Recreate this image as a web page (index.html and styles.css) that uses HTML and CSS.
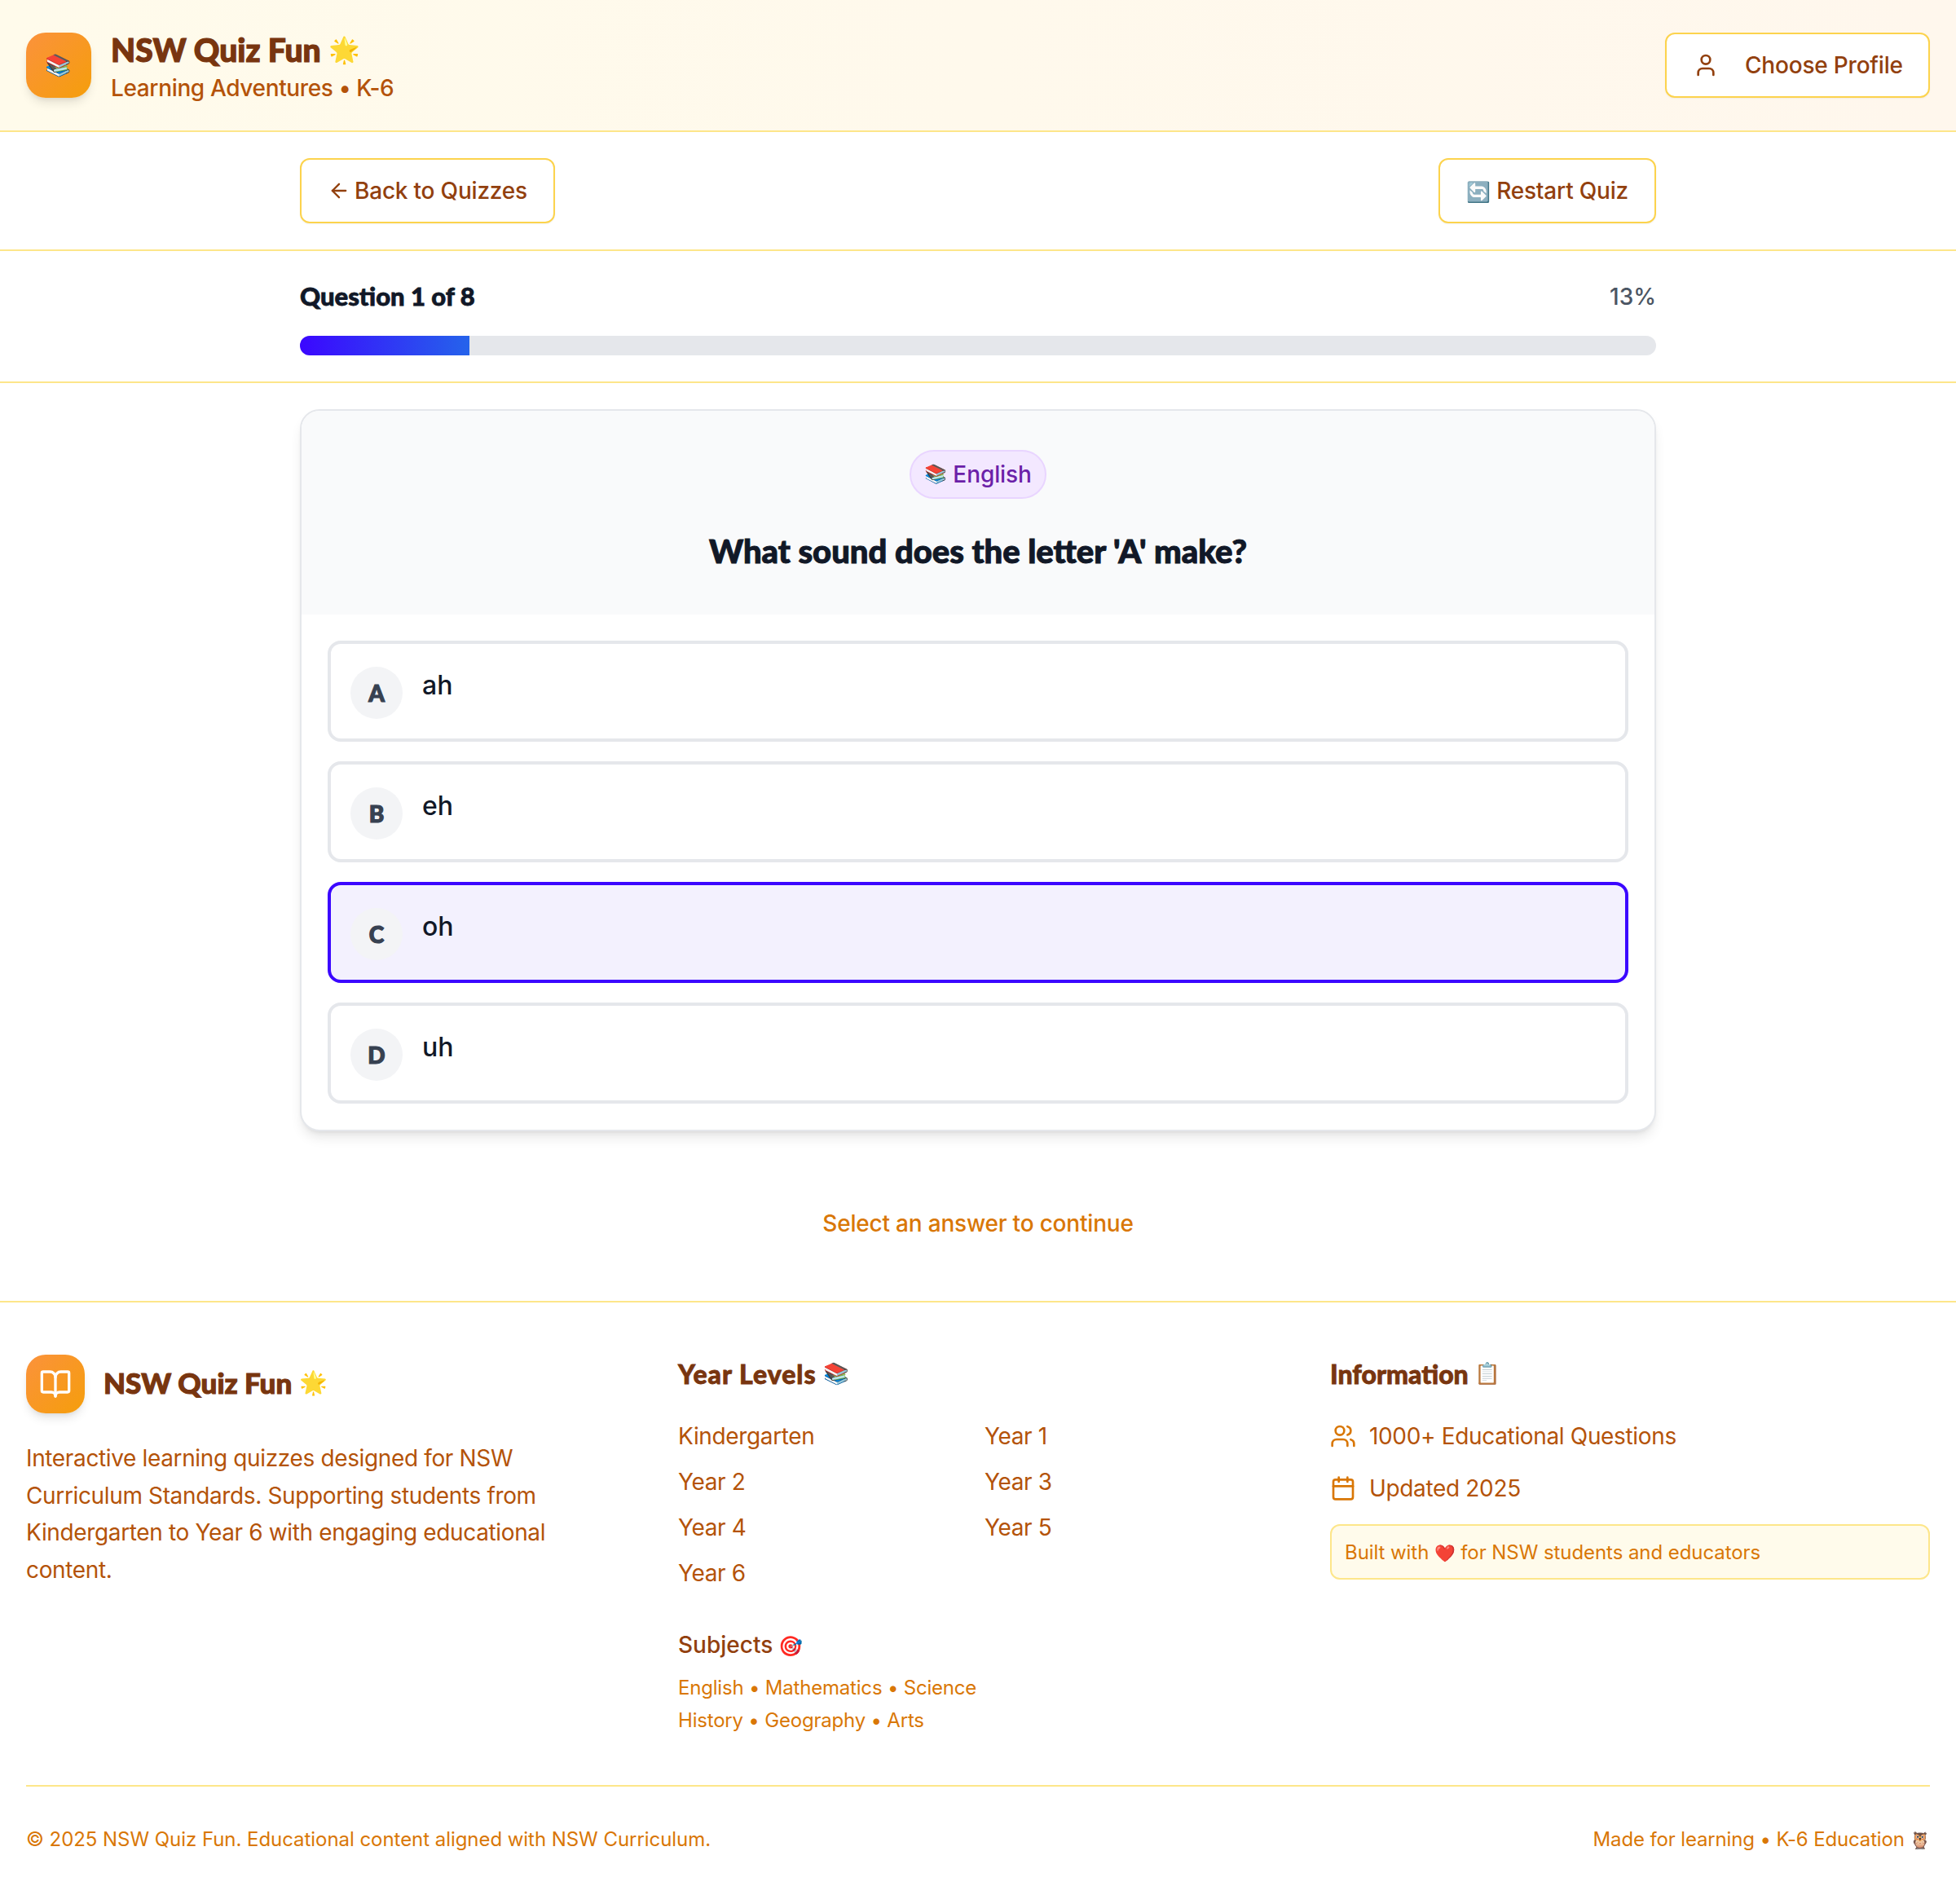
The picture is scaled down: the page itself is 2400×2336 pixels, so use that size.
FILE: index.html
```html
<!DOCTYPE html>
<html lang="en">
<head>
<meta charset="utf-8">
<title>NSW Quiz Fun</title>
<link rel="stylesheet" href="styles.css">
</head>
<body>
<header class="site-header">
  <div class="brand">
    <div class="logo"><span class="logo-emoji">📚</span></div>
    <div class="brand-text">
      <h1 class="brand-title">NSW Quiz Fun <span class="emoji">🌟</span></h1>
      <p class="brand-sub">Learning Adventures • K-6</p>
    </div>
  </div>
  <button class="btn btn-profile">
    <svg class="icon-user" viewBox="0 0 24 24"><path d="M19 21v-2a4 4 0 0 0-4-4H9a4 4 0 0 0-4 4v2"/><circle cx="12" cy="7" r="4"/></svg>
    <span>Choose Profile</span>
  </button>
</header>

<nav class="bar">
  <div class="wrap quiz-nav">
    <button class="btn btn-nav">
      <svg class="icon-arrow" viewBox="0 0 24 24"><path d="m12 19-7-7 7-7"/><path d="M19 12H5"/></svg>
      <span>Back to Quizzes</span>
    </button>
    <button class="btn btn-nav"><span><span class="emoji-lg">🔄</span> Restart Quiz</span></button>
  </div>
</nav>

<section class="bar">
  <div class="wrap progress">
    <div class="progress-head">
      <span class="progress-label">Question 1 of 8</span>
      <span class="progress-pct">13%</span>
    </div>
    <div class="track"><div class="fill" style="width:12.5%"></div></div>
  </div>
</section>

<main class="wrap main">
  <article class="card">
    <div class="card-head">
      <span class="badge"><span><span class="emoji">📚</span> English</span></span>
      <h2 class="question">What sound does the letter 'A' make?</h2>
    </div>
    <div class="options">
      <div class="option"><span class="letter">A</span><span class="answer">ah</span></div>
      <div class="option"><span class="letter">B</span><span class="answer">eh</span></div>
      <div class="option selected"><span class="letter">C</span><span class="answer">oh</span></div>
      <div class="option"><span class="letter">D</span><span class="answer">uh</span></div>
    </div>
  </article>
  <p class="hint">Select an answer to continue</p>
</main>

<footer class="footer">
  <div class="footer-cols">
    <div class="col">
      <div class="footer-brand">
        <div class="logo logo-small">
          <svg class="icon-book" viewBox="0 0 24 24"><path d="M12 7v14"/><path d="M3 18a1 1 0 0 1-1-1V4a1 1 0 0 1 1-1h5a4 4 0 0 1 4 4 4 4 0 0 1 4-4h5a1 1 0 0 1 1 1v13a1 1 0 0 1-1 1h-6a3 3 0 0 0-3 3 3 3 0 0 0-3-3z"/></svg>
        </div>
        <h3 class="footer-title">NSW Quiz Fun <span class="emoji">🌟</span></h3>
      </div>
      <p class="about">Interactive learning quizzes designed for NSW Curriculum Standards. Supporting students from Kindergarten to Year 6 with engaging educational content.</p>
    </div>
    <div class="col">
      <h4 class="col-title col-title-wide">Year Levels <span class="emoji">📚</span></h4>
      <ul class="years">
        <li>Kindergarten</li><li>Year 1</li><li>Year 2</li><li>Year 3</li><li>Year 4</li><li>Year 5</li><li>Year 6</li>
      </ul>
      <h5 class="subjects-title">Subjects <span class="emoji-lg">🎯</span></h5>
      <p class="subjects">English • Mathematics • Science<br>History • Geography • Arts</p>
    </div>
    <div class="col">
      <h4 class="col-title">Information <span class="emoji">📋</span></h4>
      <ul class="info">
        <li><svg class="icon-info" viewBox="0 0 24 24"><path d="M16 21v-2a4 4 0 0 0-4-4H6a4 4 0 0 0-4 4v2"/><circle cx="9" cy="7" r="4"/><path d="M22 21v-2a4 4 0 0 0-3-3.87"/><path d="M16 3.13a4 4 0 0 1 0 7.75"/></svg><span>1000+ Educational Questions</span></li>
        <li><svg class="icon-info" viewBox="0 0 24 24"><path d="M8 2v4"/><path d="M16 2v4"/><rect x="3" y="4" width="18" height="18" rx="2"/><path d="M3 10h18"/></svg><span>Updated 2025</span></li>
      </ul>
      <div class="built"><span>Built with <span class="emoji-lg">❤️</span> for NSW students and educators</span></div>
    </div>
  </div>
  <div class="footer-bottom">
    <span>© 2025 NSW Quiz Fun. Educational content aligned with NSW Curriculum.</span>
    <span class="made">Made for learning • K-6 Education <span class="emoji-lg owl">🦉</span></span>
  </div>
</footer>
</body>
</html>
```
FILE: styles.css
```css
* { box-sizing: border-box; margin: 0; padding: 0; }
html, body { background: #fff; }
body { font-family: Inter, "Noto Sans", "Noto Color Emoji", sans-serif; color: #111827; width: 2400px; height: 2336px; overflow: hidden; }
button { font-family: inherit; background: #fff; cursor: pointer; }
ul { list-style: none; }
svg { fill: none; stroke: currentColor; stroke-width: 2; stroke-linecap: round; stroke-linejoin: round; flex: none; display: block; }
.emoji { font-size: .8em; line-height: 0; vertical-align: .14em; -webkit-text-stroke: 0; }
.emoji-lg { font-size: .86em; line-height: 0; -webkit-text-stroke: 0; }
.owl { margin-right: -1px; }

.site-header { height: 162px; padding: 40px 32px; display: flex; justify-content: space-between; align-items: center; background: linear-gradient(90deg, #fffbeb, #fff7ed); border-bottom: 2px solid #fde68a; }
.brand { display: flex; align-items: center; gap: 24px; }
.logo { width: 80px; height: 80px; border-radius: 24px; background: linear-gradient(135deg, #fb923c, #f59e0b); box-shadow: 0 8px 12px -2px rgba(0,0,0,.1), 0 4px 6px -4px rgba(0,0,0,.1); display: flex; align-items: center; justify-content: center; flex: none; }
.logo-emoji { font-size: 26px; line-height: 1; }
.brand-text { display: flex; flex-direction: column; padding-top: 4px; }
.brand-title { font-family: Lato, sans-serif; font-weight: 900; font-size: 39px; line-height: 48px; height: 48px; color: #78350f; -webkit-text-stroke: 1.2px #78350f; }
.brand-sub { margin-top: 3px; font-size: 28px; line-height: 40px; font-weight: 500; letter-spacing: -.36px; color: #b45309; }

.btn { border: 2px solid #fcd34d; border-radius: 12px; height: 80px; display: flex; align-items: center; font-size: 28px; font-weight: 500; letter-spacing: -.2px; color: #92400e; white-space: nowrap; box-shadow: 0 1px 2px rgba(0,0,0,.05); }
.btn-profile { width: 325px; padding: 0 32px; gap: 32px; }
.icon-user { width: 32px; height: 32px; }
.btn-nav { padding: 0 32px; gap: 5px; }
.icon-arrow { width: 28px; height: 28px; }

.bar { border-bottom: 2px solid #fde68a; }
.wrap { width: 1664px; margin: 0 auto; }
.quiz-nav { height: 144px; display: flex; align-items: center; justify-content: space-between; }
.progress { height: 160px; padding-top: 32px; }
.progress-head { display: flex; justify-content: space-between; align-items: center; height: 48px; margin-bottom: 24px; }
.progress-label { padding-bottom: 2px; font-family: Lato, sans-serif; font-weight: 900; font-size: 31px; color: #111827; -webkit-text-stroke: .8px #111827; }
.progress-pct { font-size: 28px; font-weight: 500; color: #4b5563; }
.track { height: 24px; border-radius: 12px; background: #e5e7eb; overflow: hidden; }
.fill { height: 100%; background: linear-gradient(90deg, #3b07ff, #2563eb); }

.main { padding-top: 32px; }
.card { border: 2px solid #e5e7eb; border-radius: 24px; background: #fff; box-shadow: 0 10px 15px -3px rgba(0,0,0,.1), 0 4px 6px -4px rgba(0,0,0,.1); overflow: hidden; }
.card-head { height: 250px; padding-top: 48px; background: #f9fafb; display: flex; flex-direction: column; align-items: center; }
.badge { height: 60px; padding: 0 16px; border: 2px solid #e9d5ff; border-radius: 30px; background: #f3e8ff; color: #6b21a8; font-size: 28px; font-weight: 500; letter-spacing: -.1px; display: flex; align-items: center; }
.question { margin-top: 36px; font-family: Lato, sans-serif; font-weight: 900; font-size: 40px; line-height: 56px; color: #111827; -webkit-text-stroke: 1px #111827; }
.options { padding: 32px; display: flex; flex-direction: column; gap: 24px; }
.option { height: 124px; border: 4px solid #e5e7eb; border-radius: 16px; padding: 28px 24px; display: flex; gap: 24px; }
.option.selected { border-color: #3b07ff; background: #f3f1fe; }
.letter { width: 64px; height: 64px; border-radius: 50%; background: #f3f4f6; color: #374151; font-family: Lato, sans-serif; font-weight: 900; font-size: 28px; -webkit-text-stroke: 1.2px #374151; display: flex; align-items: center; justify-content: center; flex: none; }
.answer { font-size: 32px; line-height: 45px; font-weight: 500; color: #111827; }
.hint { margin-top: 93px; text-align: center; font-size: 28px; line-height: 40px; font-weight: 500; letter-spacing: -.2px; color: #d97706; }

.footer { margin-top: 75px; border-top: 2px solid #fde68a; padding: 64px 32px 0; }
.footer-cols { display: grid; grid-template-columns: repeat(3, 736px); gap: 64px; height: 528px; }
.footer-brand { display: flex; align-items: center; gap: 23px; margin-bottom: 33px; }
.logo-small { width: 72px; height: 72px; }
.icon-book { width: 40px; height: 40px; color: #fff; }
.footer-title { padding-bottom: 4px; font-family: Lato, sans-serif; font-weight: 900; font-size: 35px; color: #78350f; -webkit-text-stroke: 1.1px #78350f; }
.about { width: 672px; font-size: 28px; line-height: 45.5px; letter-spacing: -.36px; color: #b45309; }
.col-title { height: 48px; font-family: Lato, sans-serif; font-weight: 900; font-size: 32px; line-height: 48px; color: #78350f; margin-bottom: 32px; -webkit-text-stroke: .8px #78350f; }
.col-title-wide { letter-spacing: 1px; }
.years { display: grid; grid-template-columns: 360px 360px; column-gap: 16px; row-gap: 16px; font-size: 28px; line-height: 40px; letter-spacing: -.36px; color: #b45309; }
.subjects-title { margin-top: 48px; font-size: 28px; line-height: 40px; font-weight: 500; color: #92400e; }
.subjects { margin-top: 13px; font-size: 24px; line-height: 40px; letter-spacing: -.2px; color: #d97706; }
.info { display: flex; flex-direction: column; gap: 24px; font-size: 28px; line-height: 40px; letter-spacing: -.34px; color: #b45309; }
.info li { display: flex; align-items: center; gap: 16px; }
.icon-info { width: 32px; height: 32px; color: #d97706; }
.built { margin-top: 24px; height: 68px; padding: 0 16px; display: flex; align-items: center; border: 2px solid #fde68a; border-radius: 12px; background: #fffbeb; font-size: 24px; letter-spacing: -.07px; color: #d97706; }
.footer-bottom { border-top: 2px solid #fde68a; padding-top: 49px; display: flex; justify-content: space-between; font-size: 24px; line-height: 32px; letter-spacing: -.05px; color: #d97706; }
.made { letter-spacing: -.14px; white-space: nowrap; }
```
